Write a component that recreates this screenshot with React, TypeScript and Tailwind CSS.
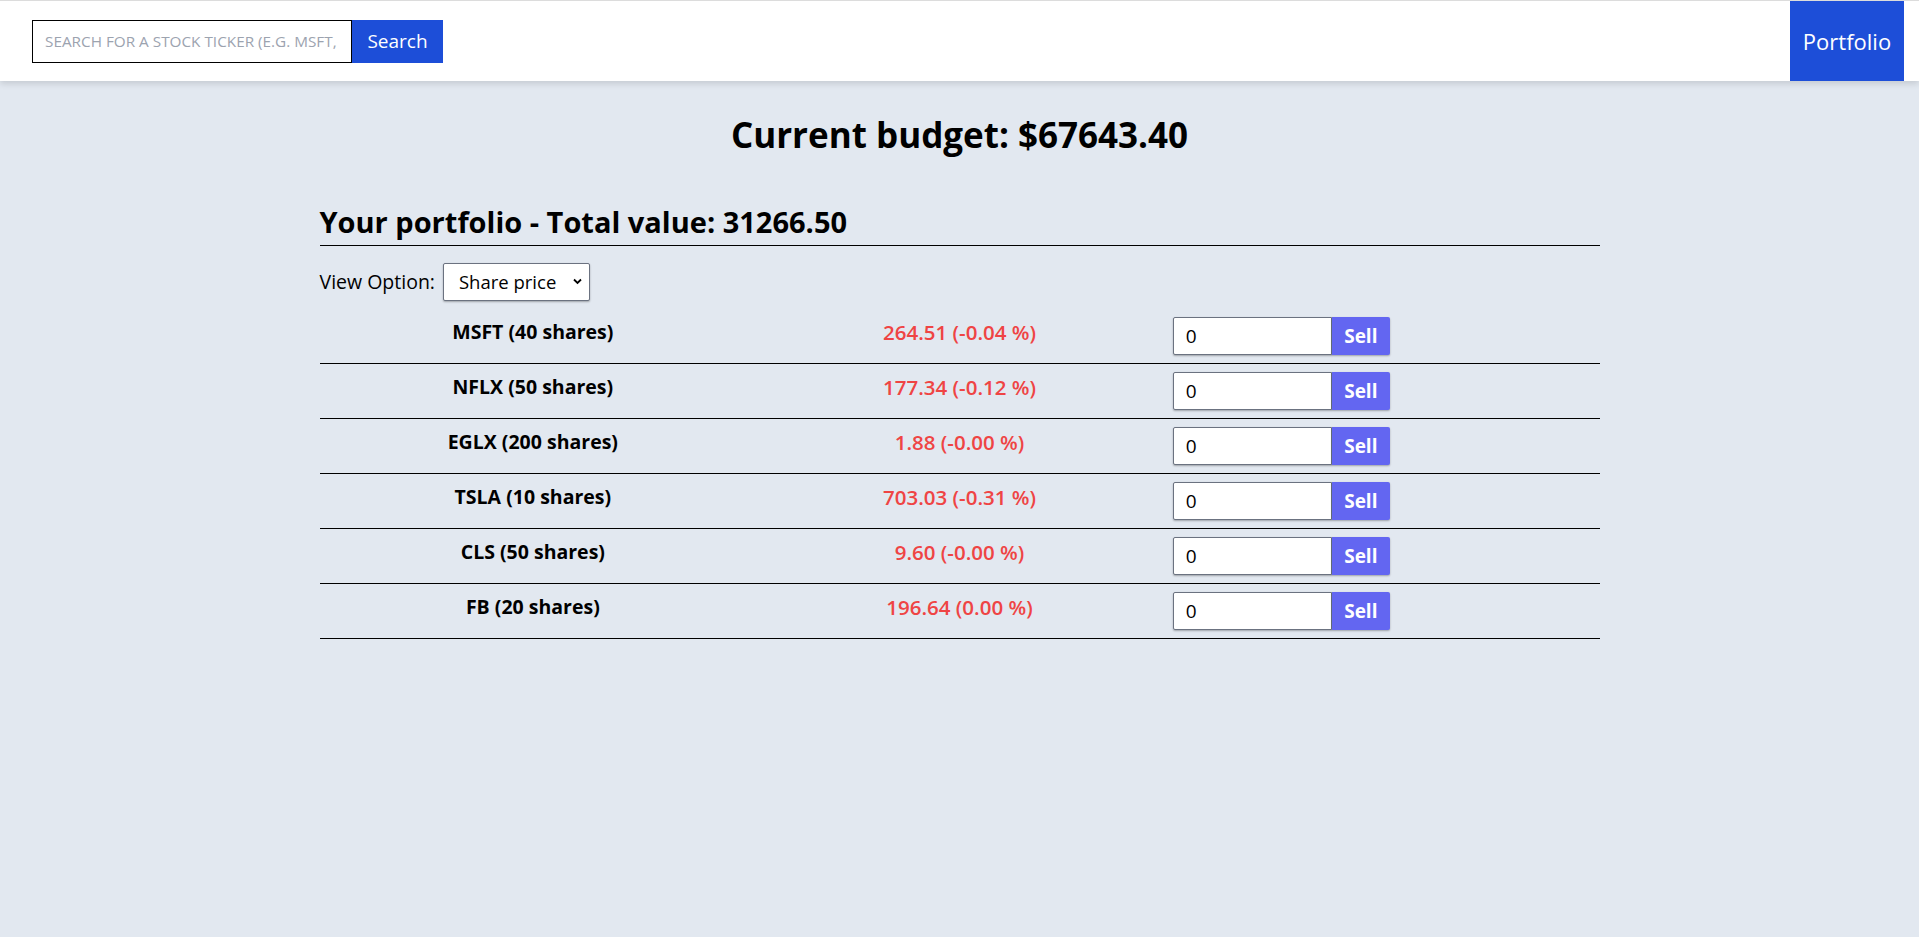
import { useState } from "react";

type Holding = {
    ticker: string;
    shares: number;
    price: string;
    change: string;
}

const holdings: Holding[] = [
    { ticker: "MSFT", shares: 40, price: "264.51", change: "-0.04" },
    { ticker: "NFLX", shares: 50, price: "177.34", change: "-0.12" },
    { ticker: "EGLX", shares: 200, price: "1.88", change: "-0.00" },
    { ticker: "TSLA", shares: 10, price: "703.03", change: "-0.31" },
    { ticker: "CLS", shares: 50, price: "9.60", change: "-0.00" },
    { ticker: "FB", shares: 20, price: "196.64", change: "0.00" },
];

const Header = () => {
    const [query, setQuery] = useState("");

    return (
        <header className="flex h-[81px] items-stretch justify-between border-t border-[#dcdcdc] bg-white pr-[15px] shadow-[0_3px_6px_rgba(0,0,0,0.12)] relative z-10">
            <form className="flex items-center pl-[32px]" onSubmit={(e) => e.preventDefault()}>
                <input
                    value={query}
                    onChange={(e) => setQuery(e.target.value)}
                    placeholder="Search for a stock ticker (e.g. MSFT, AAPL)"
                    className="h-[43px] w-[320px] border border-black px-[12px] text-[15.3px] uppercase text-black outline-none placeholder:text-[#9ca3af]"
                />
                <button className="h-[43px] w-[91px] bg-[#1d4ed8] text-[19px] text-white">Search</button>
            </form>
            <button className="w-[114px] bg-[#1d4ed8] text-[22px] text-white">Portfolio</button>
        </header>
    )
}

const HoldingRow = ({ holding }: { holding: Holding }) => {
    const [amount, setAmount] = useState(0);

    return (
        <div className="grid grid-cols-3 border-b border-black py-[8px]">
            <p className="text-center text-[19.5px] font-bold leading-[30px]">
                {holding.ticker} ({holding.shares} shares)
            </p>
            <p className="text-center text-[20.5px] font-semibold leading-[30px] text-[#ef4444]">
                {holding.price} ({holding.change} %)
            </p>
            <div className="flex">
                <input
                    type="text"
                    value={amount}
                    onChange={(e) => setAmount(Number(e.target.value) || 0)}
                    className="h-[38px] w-[159px] rounded-l-[2px] border border-[#6b7280] bg-white px-[12px] text-[19px] shadow-[0_1px_2px_rgba(0,0,0,0.3)] outline-none"
                />
                <button className="h-[38px] w-[58px] rounded-r-[2px] bg-[#6366f1] text-[19px] font-bold text-white shadow-[0_1px_2px_rgba(0,0,0,0.3)]">
                    Sell
                </button>
            </div>
        </div>
    )
}

const App = () => {
    const [view, setView] = useState("price");

    return (
        <div className="min-h-screen bg-[#e2e8f0] font-['Open_Sans',sans-serif] text-black">
            <Header />
            <main className="mx-auto max-w-[1280px]">
                <h1 className="mt-[31px] text-center text-[35px] font-bold leading-[46px]">
                    Current budget: $67643.40
                </h1>
                <h2 className="mt-[45px] border-b border-black pb-[4px] text-[29px] font-bold leading-[38px]">
                    Your portfolio - Total value: 31266.50
                </h2>
                <div className="mt-[17px] flex items-center gap-[8px]">
                    <label className="text-[19.5px]">View Option:</label>
                    <div className="relative">
                        <select
                            value={view}
                            onChange={(e) => setView(e.target.value)}
                            className="h-[38px] w-[147px] appearance-none rounded-[2px] border border-[#6b7280] bg-white pl-[15px] text-[18.5px] shadow-[0_1px_2px_rgba(0,0,0,0.3)] outline-none"
                        >
                            <option value="price">Share price</option>
                            <option value="total">Total value</option>
                        </select>
                        <svg className="pointer-events-none absolute right-[8px] top-[15px]" width="9" height="7" viewBox="0 0 9 7">
                            <path d="M1 1.5 L4.5 5 L8 1.5" fill="none" stroke="black" strokeWidth="1.8" />
                        </svg>
                    </div>
                </div>
                <div className="mt-[8px]">
                    {holdings.map((h) => (
                        <HoldingRow key={h.ticker} holding={h} />
                    ))}
                </div>
            </main>
        </div>
    )
}

export default App;
